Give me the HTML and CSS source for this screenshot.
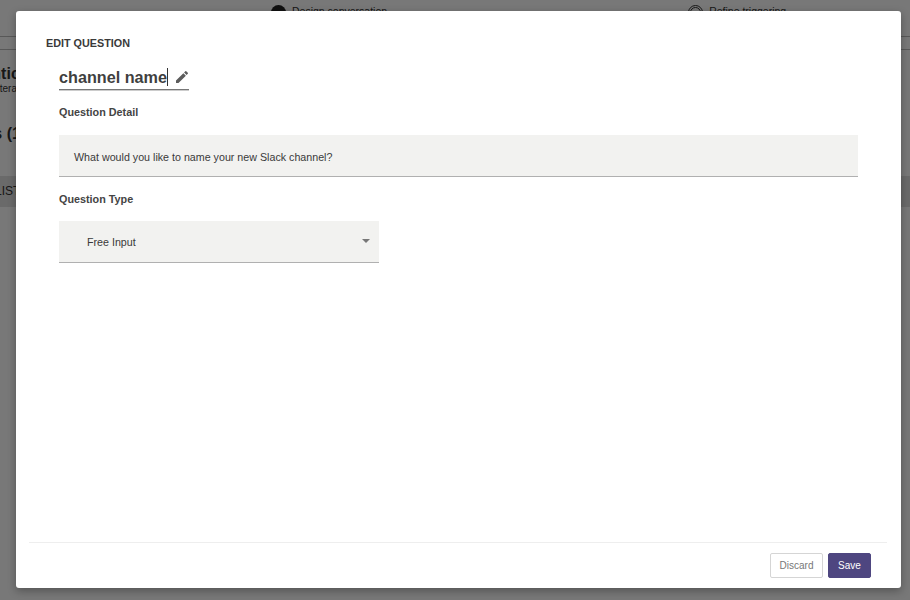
FILE: index.html
```html
<!DOCTYPE html>
<html lang="en">
<head>
<meta charset="utf-8">
<title>Edit question</title>
<link rel="stylesheet" href="styles.css">
</head>
<body>
<div class="page">
  <header class="steps">
    <div class="step"><span class="step-icon dark"></span><span>Design conversation</span></div>
    <div class="step"><span class="step-icon ring"></span><span>Refine triggering</span></div>
  </header>
  <div class="subnav"></div>
  <section class="back">
    <h2 class="back-title">Authentication</h2>
    <p class="back-sub">Iterate</p>
    <h3 class="back-count">Questions (1)</h3>
    <div class="back-tab">LIST</div>
  </section>
</div>
<div class="overlay">
  <div class="modal">
    <main class="modal-body">
      <h1 class="modal-title">EDIT QUESTION</h1>
      <div class="form">
        <div class="name-row">
          <span class="name">channel name</span><span class="caret"></span>
          <svg class="pencil" viewBox="0 0 24 24" aria-hidden="true"><path d="M3 17.25V21h3.75L17.81 9.94l-3.75-3.75L3 17.25zM20.71 7.04a1 1 0 0 0 0-1.41l-2.34-2.34a1 1 0 0 0-1.41 0l-1.83 1.83 3.75 3.75 1.83-1.83z"/></svg>
        </div>
        <label class="label label-detail">Question Detail</label>
        <div class="field detail">What would you like to name your new Slack channel?</div>
        <label class="label label-type">Question Type</label>
        <div class="field select">
          <span>Free Input</span>
          <span class="arrow"></span>
        </div>
      </div>
    </main>
    <footer class="modal-footer">
      <button class="btn discard" type="button">Discard</button>
      <button class="btn save" type="button">Save</button>
    </footer>
  </div>
</div>
</body>
</html>
```
FILE: styles.css
```css
* { box-sizing: border-box; }
html, body { margin: 0; height: 100%; }
body {
  width: 910px;
  height: 600px;
  overflow: hidden;
  background: #fff;
  font-family: "Liberation Sans", Arial, sans-serif;
  color: #333;
}
.page { height: 600px; overflow: hidden; }
.steps {
  height: 37px;
  border-bottom: 1px solid #bbb;
  display: flex;
  padding-left: 271px;
  gap: 301px;
  font-size: 10.5px;
}
.step { display: flex; gap: 6px; padding-top: 5px; height: 24px; align-items: flex-start; white-space: nowrap; }
.step-icon { width: 15px; height: 15px; border-radius: 50%; flex: none; }
.step-icon.dark { background: #222; }
.step-icon.ring { border: 3px double #333; }
.subnav { height: 13px; border-bottom: 1px solid #bbb; }
.back-title { margin: 15px 0 0 -54px; font-size: 16px; line-height: 18px; white-space: nowrap; }
.back-sub { margin: 0 0 0 -3px; font-size: 10px; line-height: 12px; }
.back-count { margin: 30px 0 0 -76px; font-size: 16px; line-height: 18px; white-space: nowrap; }
.back-tab {
  margin-top: 33px;
  height: 31px;
  background: #e2e2e2;
  font-size: 12px;
  line-height: 31px;
  text-indent: -5px;
}
.overlay {
  position: absolute;
  inset: 0;
  background: rgba(0, 0, 0, 0.53);
  padding: 11px 9px 12px 16px;
}
.modal {
  height: 577px;
  background: #fff;
  border-radius: 3px;
  display: flex;
  flex-direction: column;
  box-shadow: 0 3px 8px rgba(0, 0, 0, 0.3);
}
.modal-body { flex: 1; padding: 26px 30px 0; }
.modal-title {
  margin: 0;
  font-size: 10.8px;
  line-height: 13px;
  font-weight: 700;
  color: #3a3a3a;
}
.form { padding-left: 13px; width: 812px; }
.name-row {
  margin-top: 13px;
  width: 130px;
  height: 27px;
  padding-top: 2px;
  display: flex;
  align-items: center;
  border-bottom: 1px solid #777;
  box-shadow: 0 1px 0 #ccc;
  white-space: nowrap;
}
.name { font-size: 16.2px; font-weight: 700; line-height: 24px; color: #3f3f3f; }
.caret { width: 1px; height: 18px; background: #333; flex: none; }
.pencil { width: 16px; height: 16px; margin-left: 6px; fill: #5c5c5c; flex: none; }
.label { display: block; font-size: 10.8px; line-height: 13px; font-weight: 700; color: #444; }
.label-detail { margin-top: 16px; }
.label-type { margin-top: 16px; }
.field {
  background: #f2f2f0;
  border-bottom: 1px solid #b0b0b0;
  font-size: 10.7px;
  color: #3a3a3a;
}
.detail { margin-top: 16px; height: 42px; padding-left: 15px; line-height: 44px; }
.select {
  margin-top: 15px;
  width: 320px;
  height: 42px;
  padding: 0 9px 0 28px;
  display: flex;
  align-items: center;
  justify-content: space-between;
}
.arrow {
  width: 0;
  height: 0;
  border-left: 4px solid transparent;
  border-right: 4px solid transparent;
  border-top: 4px solid #777;
  margin-bottom: 2px;
}
.modal-footer {
  margin: 0 14px 0 13px;
  height: 46px;
  border-top: 1px solid #eee;
  display: flex;
  justify-content: flex-end;
  align-items: flex-start;
  gap: 5px;
  padding: 10px 16px 0 0;
}
.btn {
  height: 25px;
  border-radius: 2px;
  font-family: inherit;
  font-size: 10px;
  padding: 0;
}
.discard { width: 53px; background: #fff; border: 1px solid #d5d5d5; color: #777; }
.save { width: 43px; background: #4e4680; border: 1px solid #4e4680; color: #fff; }
```
